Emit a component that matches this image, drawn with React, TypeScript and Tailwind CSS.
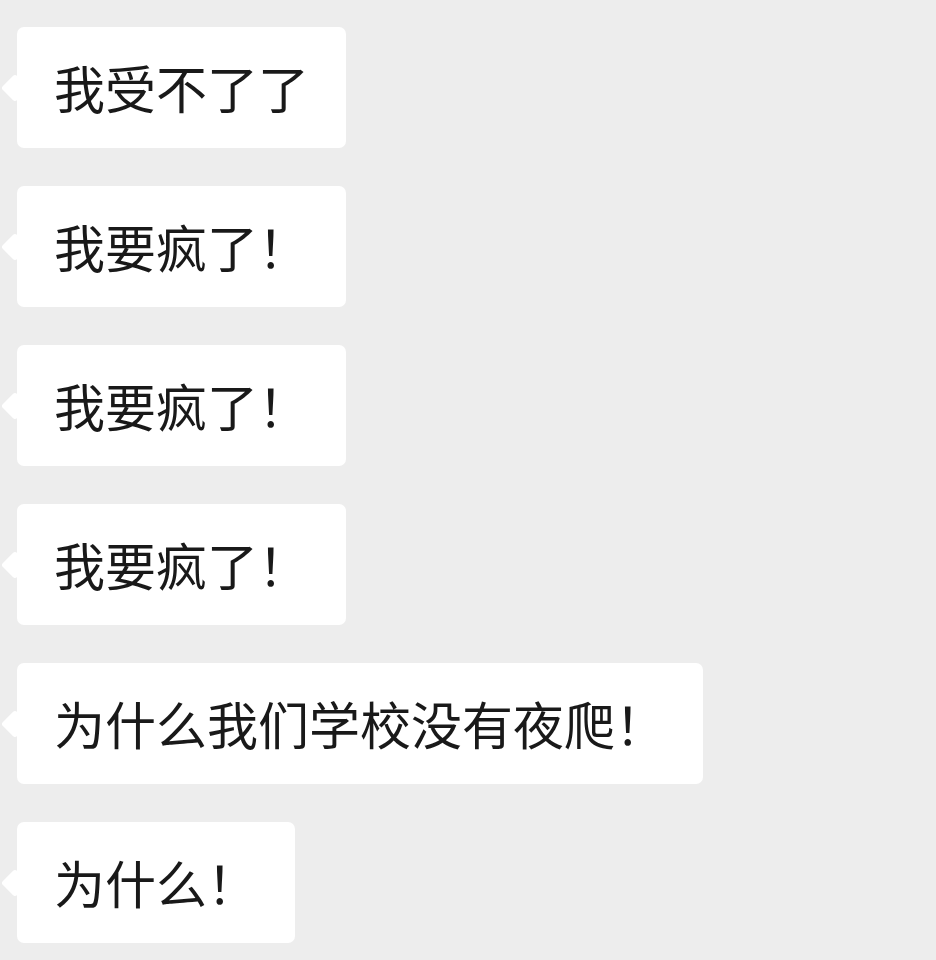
import React from 'react';

const messages = [
  '我受不了了',
  '我要疯了！',
  '我要疯了！',
  '我要疯了！',
  '为什么我们学校没有夜爬！',
  '为什么！',
];

const Bubble = ({ text }: { text: string }) => (
  <div className="relative self-start">
    {/* tail */}
    <div className="absolute left-[-12px] top-1/2 -translate-y-1/2 w-[20px] h-[20px] rotate-45 rounded-[3px] bg-white" />
    <div className="relative rounded-[7px] bg-white px-[37px] py-[35px] text-[51px] leading-[51px] text-[#191919] whitespace-nowrap">
      {text}
    </div>
  </div>
);

const App: React.FC = () => {
  return (
    <div
      className="min-h-screen w-full bg-[#ededed] pl-[17px] pt-[27px] flex flex-col gap-[38px]"
      style={{ fontFamily: '"Noto Sans CJK SC", "Noto Sans", sans-serif' }}
    >
      {messages.map((m, i) => (
        <Bubble key={i} text={m} />
      ))}
    </div>
  );
};

export default App;
